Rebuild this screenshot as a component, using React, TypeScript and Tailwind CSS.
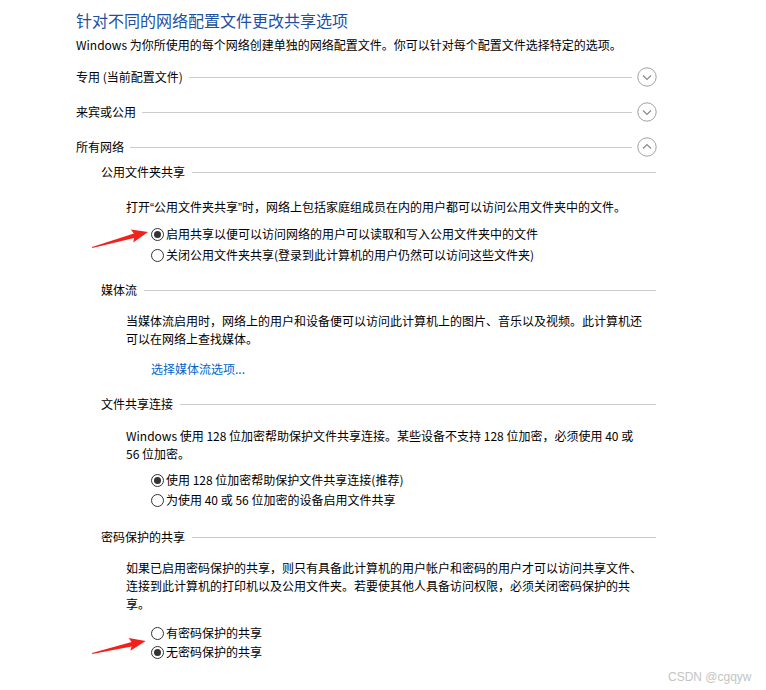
import React from "react";

const font = { fontFamily: '"Noto Sans CJK SC", "Noto Sans", sans-serif' };
const latin = { fontFamily: '"Liberation Sans", Arial, sans-serif' };

const Chevron = ({ up }: { up?: boolean }) => (
  <svg width="20" height="20" viewBox="0 0 20 20" className="shrink-0 ml-[5px]">
    <circle cx="10" cy="10" r="9.2" fill="white" stroke="#a0a0a0" strokeWidth="1" />
    <polyline
      points={up ? "6,11.5 10,7.5 14,11.5" : "6,8.5 10,12.5 14,8.5"}
      fill="none"
      stroke="#8a8a8a"
      strokeWidth="1.2"
    />
  </svg>
);

const GroupHeader = ({ label, up, className }: { label: string; up?: boolean; className: string }) => (
  <div className={`flex items-center h-[20px] w-[581px] ${className}`}>
    <span className="whitespace-nowrap text-[12px] text-black">{label}</span>
    <div className="flex-1 h-px bg-[#cccccc] ml-[6px]" />
    <Chevron up={up} />
  </div>
);

const SubHeader = ({ label, className }: { label: string; className: string }) => (
  <div className={`flex items-center h-[18px] w-[555px] ${className}`}>
    <span className="whitespace-nowrap text-[12px] text-black">{label}</span>
    <div className="flex-1 h-px bg-[#cccccc] ml-[7px]" />
  </div>
);

const Radio = ({ label, checked, className }: { label: string; checked?: boolean; className: string }) => (
  <div className={`flex items-center pl-[50px] ${className}`}>
    <span className="w-[13px] h-[13px] rounded-full border border-[#333333] bg-white flex items-center justify-center mt-[1px]">
      {checked && <span className="w-[7px] h-[7px] rounded-full bg-[#333333]" />}
    </span>
    <span className="ml-[2px] whitespace-nowrap text-[12px] text-black">{label}</span>
  </div>
);

const Desc = ({ children, className }: { children: React.ReactNode; className: string }) => (
  <p className={`pl-[25px] text-[12px] leading-[18px] text-black whitespace-nowrap ${className}`}>{children}</p>
);

export default function App() {
  return (
    <div className="relative w-[766px] h-[690px] bg-white overflow-hidden pl-[76px]" style={font}>
      <h1 className="mt-[9px] h-[22px] leading-[22px] text-[16px] text-[#2150a3] font-normal whitespace-nowrap">
        针对不同的网络配置文件更改共享选项
      </h1>
      <p className="mt-[5px] h-[18px] leading-[18px] text-[12px] text-black whitespace-nowrap">
        Windows 为你所使用的每个网络创建单独的网络配置文件。你可以针对每个配置文件选择特定的选项。
      </p>

      <GroupHeader label="专用 (当前配置文件)" className="mt-[13px]" />
      <GroupHeader label="来宾或公用" className="mt-[15px]" />
      <GroupHeader label="所有网络" up className="mt-[15px]" />

      <div className="pl-[25px]">
        <SubHeader label="公用文件夹共享" className="mt-[6px]" />
        <Desc className="mt-[17px]">
          打开<span style={latin}>“</span>公用文件夹共享<span style={latin}>”</span>时，网络上包括家庭组成员在内的用户都可以访问公用文件夹中的文件。
        </Desc>
        <Radio checked label="启用共享以便可以访问网络的用户可以读取和写入公用文件夹中的文件" className="mt-[7px] h-[20px]" />
        <Radio label="关闭公用文件夹共享(登录到此计算机的用户仍然可以访问这些文件夹)" className="mt-[1px] h-[20px]" />

        <SubHeader label="媒体流" className="mt-[16px]" />
        <Desc className="mt-[13px]">
          当媒体流启用时，网络上的用户和设备便可以访问此计算机上的图片、音乐以及视频。此计算机还
          <br />
          可以在网络上查找媒体。
        </Desc>
        <a className="block mt-[12px] pl-[50px] h-[18px] leading-[18px] text-[12px] text-[#0066cc] whitespace-nowrap">
          选择媒体流选项...
        </a>

        <SubHeader label="文件共享连接" className="mt-[17px]" />
        <Desc className="mt-[14px]">
          Windows 使用 128 位加密帮助保护文件共享连接。某些设备不支持 128 位加密，必须使用 40 或
          <br />
          56 位加密。
        </Desc>
        <Radio checked label="使用 128 位加密帮助保护文件共享连接(推荐)" className="mt-[7px] h-[20px]" />
        <Radio label="为使用 40 或 56 位加密的设备启用文件共享" className="h-[20px]" />

        <SubHeader label="密码保护的共享" className="mt-[18px]" />
        <Desc className="mt-[13px]">
          如果已启用密码保护的共享，则只有具备此计算机的用户帐户和密码的用户才可以访问共享文件、
          <br />
          连接到此计算机的打印机以及公用文件夹。若要使其他人具备访问权限，必须关闭密码保护的共
          <br />
          享。
        </Desc>
        <Radio label="有密码保护的共享" className="mt-[10px] h-[19px]" />
        <Radio checked label="无密码保护的共享" className="h-[19px]" />
      </div>

      <span
        className="absolute left-[668px] top-[668px] text-[12px] text-[#c4c4c4] whitespace-nowrap"
        style={latin}
      >
        CSDN @cgqyw
      </span>

      <svg className="absolute inset-0 pointer-events-none" width="766" height="690">
        <polygon
          points="0,0 44,-2.2 42,-6.8 58,0 41,6.2 43,2.2 0,1"
          fill="#f2211b"
          transform="translate(92,247) rotate(-15)"
        />
        <polygon
          points="0,0 41,-2.2 39,-6.6 55,0 38,6 40,2.2 0,1"
          fill="#f2211b"
          transform="translate(92,653) rotate(-12.5)"
        />
      </svg>
    </div>
  );
}
